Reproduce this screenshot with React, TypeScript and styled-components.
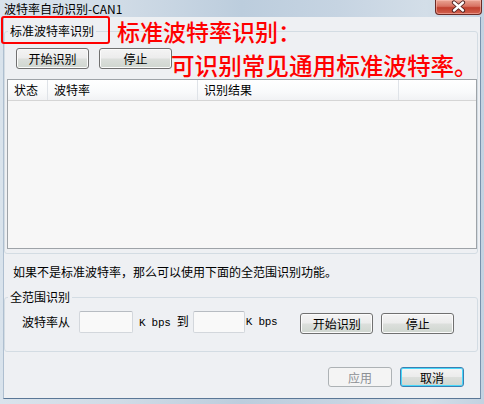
import React from "react";
import styled, {createGlobalStyle} from "styled-components";

const GlobalStyle = createGlobalStyle`
  html, body {
    margin: 0;
    padding: 0;
    background: #c9d8e6;
  }
  body {
    font-family: "Noto Sans CJK SC", "Noto Sans", sans-serif;
    font-size: 12px;
  }
`;

type ButtonKind = "normal" | "disabled" | "default";

const columns = [
    {title: "状态", width: 40},
    {title: "波特率", width: 150},
    {title: "识别结果", width: 201},
];

const App: React.FC = () => {
    return (
        <>
            <GlobalStyle/>
            <Window>
                <TitleBar>
                    <Title>波特率自动识别-CAN1</Title>
                    <CloseButton>
                        <svg width="47" height="15" viewBox="0 0 47 15">
                            <path d="M19 3.5 L28 11.5 M28 3.5 L19 11.5" stroke="#4a2020" strokeWidth="4.2" strokeLinecap="round"/>
                            <path d="M19 3.5 L28 11.5 M28 3.5 L19 11.5" stroke="#ffffff" strokeWidth="2.4" strokeLinecap="round"/>
                        </svg>
                    </CloseButton>
                </TitleBar>

                <Client>
                    <GroupBox $top={7}>
                        <Caption>标准波特率识别</Caption>
                        <GroupBody $padding="10px 0 4px 2px">
                            <ButtonRow>
                                <Button $width={73}>开始识别</Button>
                                <Button $width={73}>停止</Button>
                            </ButtonRow>
                            <ListView>
                                <ListHeader>
                                    {columns.map(col => (
                                        <HeaderCell key={col.title} $width={col.width}>{col.title}</HeaderCell>
                                    ))}
                                    <HeaderFill/>
                                </ListHeader>
                            </ListView>
                        </GroupBody>
                    </GroupBox>

                    <Hint>如果不是标准波特率，那么可以使用下面的全范围识别功能。</Hint>

                    <GroupBox $top={11}>
                        <Caption>全范围识别</Caption>
                        <GroupBody $padding="7px 0 18px 17px">
                            <RangeRow>
                                <Label>波特率从</Label>
                                <Input $width={54} $gap={9}/>
                                <Unit $gap={6}>K bps <UnitCjk>到</UnitCjk></Unit>
                                <Input $width={52} $gap={4}/>
                                <Unit $gap={1}>K bps</Unit>
                                <RangeButtons>
                                    <Button $width={73}>开始识别</Button>
                                    <Button $width={73}>停止</Button>
                                </RangeButtons>
                            </RangeRow>
                        </GroupBody>
                    </GroupBox>

                    <Footer>
                        <Button $width={64} $height={20} $kind="disabled">应用</Button>
                        <Button $width={64} $height={20} $kind="default">取消</Button>
                    </Footer>
                </Client>

                <RedFrame/>
                <Note $left={117} $top={18} $size={23}>标准波特率识别：</Note>
                <Note $left={171} $top={52} $size={23.6}>可识别常见通用标准波特率。</Note>
            </Window>
        </>
    );
}

export default App;

const Window = styled.div`
  position: relative;
  width: 484px;
  height: 404px;
  overflow: hidden;
  display: flex;
  flex-direction: column;
  background: linear-gradient(90deg, #d9e3ec 0%, #d0dbe6 25%, #bccddd 50%, #c6d4e2 70%, #d3dee8 88%, #c2d2e1 100%);
`;

const TitleBar = styled.div`
  height: 17px;
  display: flex;
  align-items: flex-start;
  justify-content: space-between;
`;

const Title = styled.div`
  padding: 2px 0 0 4px;
  font-size: 12px;
  line-height: 14px;
  color: #000;
`;

const CloseButton = styled.div`
  width: 47px;
  height: 15px;
  margin-right: 2px;
  box-sizing: border-box;
  border: 1px solid #6b2a24;
  border-top: none;
  border-radius: 0 0 4px 4px;
  background: linear-gradient(180deg, #e9a594 0%, #d87262 45%, #c0402e 55%, #d2624f 100%);
  box-shadow: inset 0 0 0 1px rgba(255, 200, 190, 0.5);
  display: flex;

  svg {
    margin: -1px;
  }
`;

const Client = styled.div`
  flex: 1;
  margin: 0 3px 5px 3px;
  background: #eef0f3;
  border-left: 1px solid #aebfd0;
  border-right: 1px solid #7892ad;
  border-bottom: 1px solid #5a7796;
  display: flex;
  flex-direction: column;
`;

const GroupBox = styled.fieldset<{ $top: number }>`
  margin: ${p => p.$top}px 2px 0 0;
  padding: 0;
  border: 1px solid #d3dce3;
  border-radius: 3px;
  min-width: 0;
`;

const Caption = styled.legend`
  margin-left: 3px;
  padding: 0 2px;
  font-size: 12px;
  line-height: 14px;
  color: #000;
`;

const GroupBody = styled.div<{ $padding: string }>`
  padding: ${p => p.$padding};
  display: flex;
  flex-direction: column;
`;

const ButtonRow = styled.div`
  display: flex;
  gap: 10px;
  margin-left: 9px;
`;

const Button = styled.div<{ $width: number; $height?: number; $kind?: ButtonKind }>`
  box-sizing: border-box;
  width: ${p => p.$width}px;
  height: ${p => p.$height ?? 21}px;
  display: flex;
  align-items: center;
  justify-content: center;
  font-size: 12px;
  border-radius: 3px;
  color: ${p => (p.$kind === "disabled" ? "#8d9094" : "#000")};
  border: 1px solid ${p => (p.$kind === "disabled" ? "#adb2b5" : p.$kind === "default" ? "#3c7fb1" : "#707070")};
  background: ${p => (p.$kind === "disabled"
    ? "#f4f4f4"
    : "linear-gradient(180deg, #f4f4f4 0%, #ececec 48%, #dcdfdc 52%, #cfd6cf 100%)")};
  box-shadow: ${p => (p.$kind === "default"
    ? "inset 0 0 0 1px #48d8fb"
    : p.$kind === "disabled" ? "none" : "inset 0 0 0 1px #fbfbfb")};
`;

const ListView = styled.div`
  margin-top: 10px;
  height: 170px;
  box-sizing: border-box;
  border: 1px solid #9ea3a8;
  background: #f7f7f7;
`;

const ListHeader = styled.div`
  display: flex;
  height: 21px;
  box-sizing: border-box;
  border-bottom: 1px solid #d5d5d5;
  background: linear-gradient(180deg, #ffffff 0%, #f9fafb 60%, #f1f2f4 100%);
`;

const HeaderCell = styled.div<{ $width: number }>`
  width: ${p => p.$width}px;
  box-sizing: border-box;
  padding-left: 6px;
  border-right: 1px solid #dfe3e8;
  font-size: 12px;
  line-height: 20px;
  color: #000;
`;

const HeaderFill = styled.div`
  flex: 1;
`;

const Hint = styled.div`
  margin: 11px 0 0 9px;
  font-size: 12px;
  line-height: 14px;
  color: #000;
`;

const RangeRow = styled.div`
  display: flex;
  align-items: center;
  height: 22px;
`;

const Label = styled.span`
  font-size: 12px;
  line-height: 14px;
`;

const Input = styled.div<{ $width: number; $gap: number }>`
  box-sizing: border-box;
  width: ${p => p.$width}px;
  height: 22px;
  margin-left: ${p => p.$gap}px;
  border: 1px solid #d3d7dc;
  border-top-color: #b7bcc2;
  border-radius: 2px;
  background: #f9f9f9;
`;

const Unit = styled.span<{ $gap: number }>`
  margin-left: ${p => p.$gap}px;
  font-family: "Liberation Mono", monospace;
  font-size: 11px;
  letter-spacing: -0.3px;
  line-height: 14px;
  white-space: pre;
  color: #000;
`;

const UnitCjk = styled.span`
  font-family: "Noto Sans CJK SC", sans-serif;
  font-size: 12px;
  letter-spacing: 0;
`;

const RangeButtons = styled.div`
  display: flex;
  gap: 8px;
  margin-left: 23px;
  margin-top: 3px;
`;

const Footer = styled.div`
  display: flex;
  justify-content: flex-end;
  gap: 8px;
  margin-top: 15px;
  padding-right: 16px;
`;

const RedFrame = styled.div`
  position: absolute;
  left: 1px;
  top: 16px;
  width: 109px;
  height: 28px;
  box-sizing: border-box;
  border: 2px solid #ff0000;
  border-radius: 3px;
`;

const Note = styled.div<{ $left: number; $top: number; $size: number }>`
  position: absolute;
  left: ${p => p.$left}px;
  top: ${p => p.$top}px;
  font-size: ${p => p.$size}px;
  line-height: 26px;
  font-weight: 500;
  color: #ff0000;
  white-space: nowrap;
`;
